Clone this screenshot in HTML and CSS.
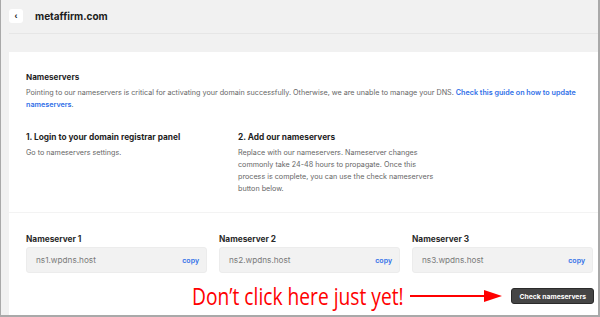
FILE: index.html
```html
<!DOCTYPE html>
<html lang="en">
<head>
    <meta charset="UTF-8">
    <title>metaffirm.com - Nameservers</title>
    <link rel="stylesheet" href="styles.css">
</head>
<body>
    <div class="frame">
        <div class="topbar">
            <button class="back">&#8249;</button>
            <h1>metaffirm.com</h1>
        </div>

        <div class="card">
            <div class="intro">
                <h2>Nameservers</h2>
                <p>Pointing to our nameservers is critical for activating your domain successfully. Otherwise, we are unable to manage your DNS. <a href="#">Check this guide on how to update nameservers</a>.</p>
            </div>

            <div class="steps">
                <div class="step">
                    <h3>1. Login to your domain registrar panel</h3>
                    <p>Go to nameservers settings.</p>
                </div>
                <div class="step">
                    <h3>2. Add our nameservers</h3>
                    <p>Replace with our nameservers. Nameserver changes commonly take 24-48 hours to propagate. Once this process is complete, you can use the check nameservers button below.</p>
                </div>
            </div>

            <div class="servers">
                <div class="ns">
                    <label>Nameserver 1</label>
                    <div class="ns-box"><span>ns1.wpdns.host</span><a href="#">copy</a></div>
                </div>
                <div class="ns">
                    <label>Nameserver 2</label>
                    <div class="ns-box"><span>ns2.wpdns.host</span><a href="#">copy</a></div>
                </div>
                <div class="ns">
                    <label>Nameserver 3</label>
                    <div class="ns-box"><span>ns3.wpdns.host</span><a href="#">copy</a></div>
                </div>
            </div>

            <div class="actions">
                <span class="note"><span>Don’t click here just yet!</span></span>
                <svg class="arrow" width="92" height="14" viewBox="0 0 92 14">
                    <line x1="0" y1="7" x2="78" y2="7" stroke="#f00" stroke-width="2"/>
                    <polygon points="74,1 92,7 74,13" fill="#f00"/>
                </svg>
                <button class="check">Check nameservers</button>
            </div>
        </div>
    </div>
</body>
</html>
```

FILE: styles.css
```css
body { margin: 0; font-family: Inter, "Noto Sans", sans-serif; }
.frame { width: 600px; height: 317px; box-sizing: border-box; background: #f1f1f1; border-left: 1px solid #a9a9a9; border-right: 2px solid #a9a9a9; border-bottom: 2px solid #a9a9a9; overflow: hidden; }
.topbar { display: flex; align-items: center; height: 34px; box-sizing: border-box; margin-left: 8px; padding-bottom: 1px; border-bottom: 1px solid #e6e6e6; }
.back { width: 14px; height: 14px; padding: 0; border: none; border-radius: 3px; background: #fff; font-size: 9px; line-height: 14px; color: #222; font-weight: bold; }
.topbar h1 { margin: 0 0 0 12px; font-size: 10px; font-weight: 700; color: #1c1c1c; }
.card { margin: 18px 0 0 8px; background: #fff; padding: 18px 4px 0 17px; height: 400px; }
h2 { margin: 0 0 3px; font-size: 8.1px; font-weight: 700; color: #1f1f1f; line-height: 14px; }
p { margin: 0; font-size: 7.2px; line-height: 12px; color: #666; }
a { color: #2f6fe8; font-weight: 600; text-decoration: none; }
.steps { display: grid; grid-template-columns: 212px 200px; margin: 20px -4px 0 -17px; padding: 0 0 17px 17px; border-bottom: 1px solid #f3f3f3; }
h3 { margin: 0 0 3px; font-size: 8.3px; font-weight: 700; color: #1f1f1f; line-height: 13px; }
.servers { display: flex; gap: 12px; margin-top: 20px; }
.ns { width: 181px; flex-shrink: 0; }
.ns label { display: block; font-size: 8.3px; font-weight: 700; color: #2a2a2a; line-height: 13px; margin-bottom: 1px; }
.ns-box { display: flex; justify-content: space-between; align-items: center; height: 26px; box-sizing: border-box; padding: 0 7px 0 9px; background: #f2f2f2; border: 1px solid #ececec; border-radius: 3px; }
.ns-box span { font-size: 8.2px; color: #7a7a7a; }
.ns-box a { font-size: 7px; }
.actions { display: flex; justify-content: flex-end; align-items: center; margin-top: 12px; }
.note { display: inline-block; width: 212px; height: 22px; line-height: 22px; white-space: nowrap; }
.note span { display: inline-block; font-family: "Liberation Sans Narrow", "Open Sans", sans-serif; font-size: 23px; color: #f00; transform: scaleX(0.835); transform-origin: left center; }
.arrow { margin: 0 9px 0 6px; }
.check { height: 16px; padding: 0 7px; border: 1px solid #2a2a2a; border-radius: 3px; background: #454545; color: #fff; font-family: Inter, sans-serif; font-size: 6.8px; font-weight: 700; }
```
